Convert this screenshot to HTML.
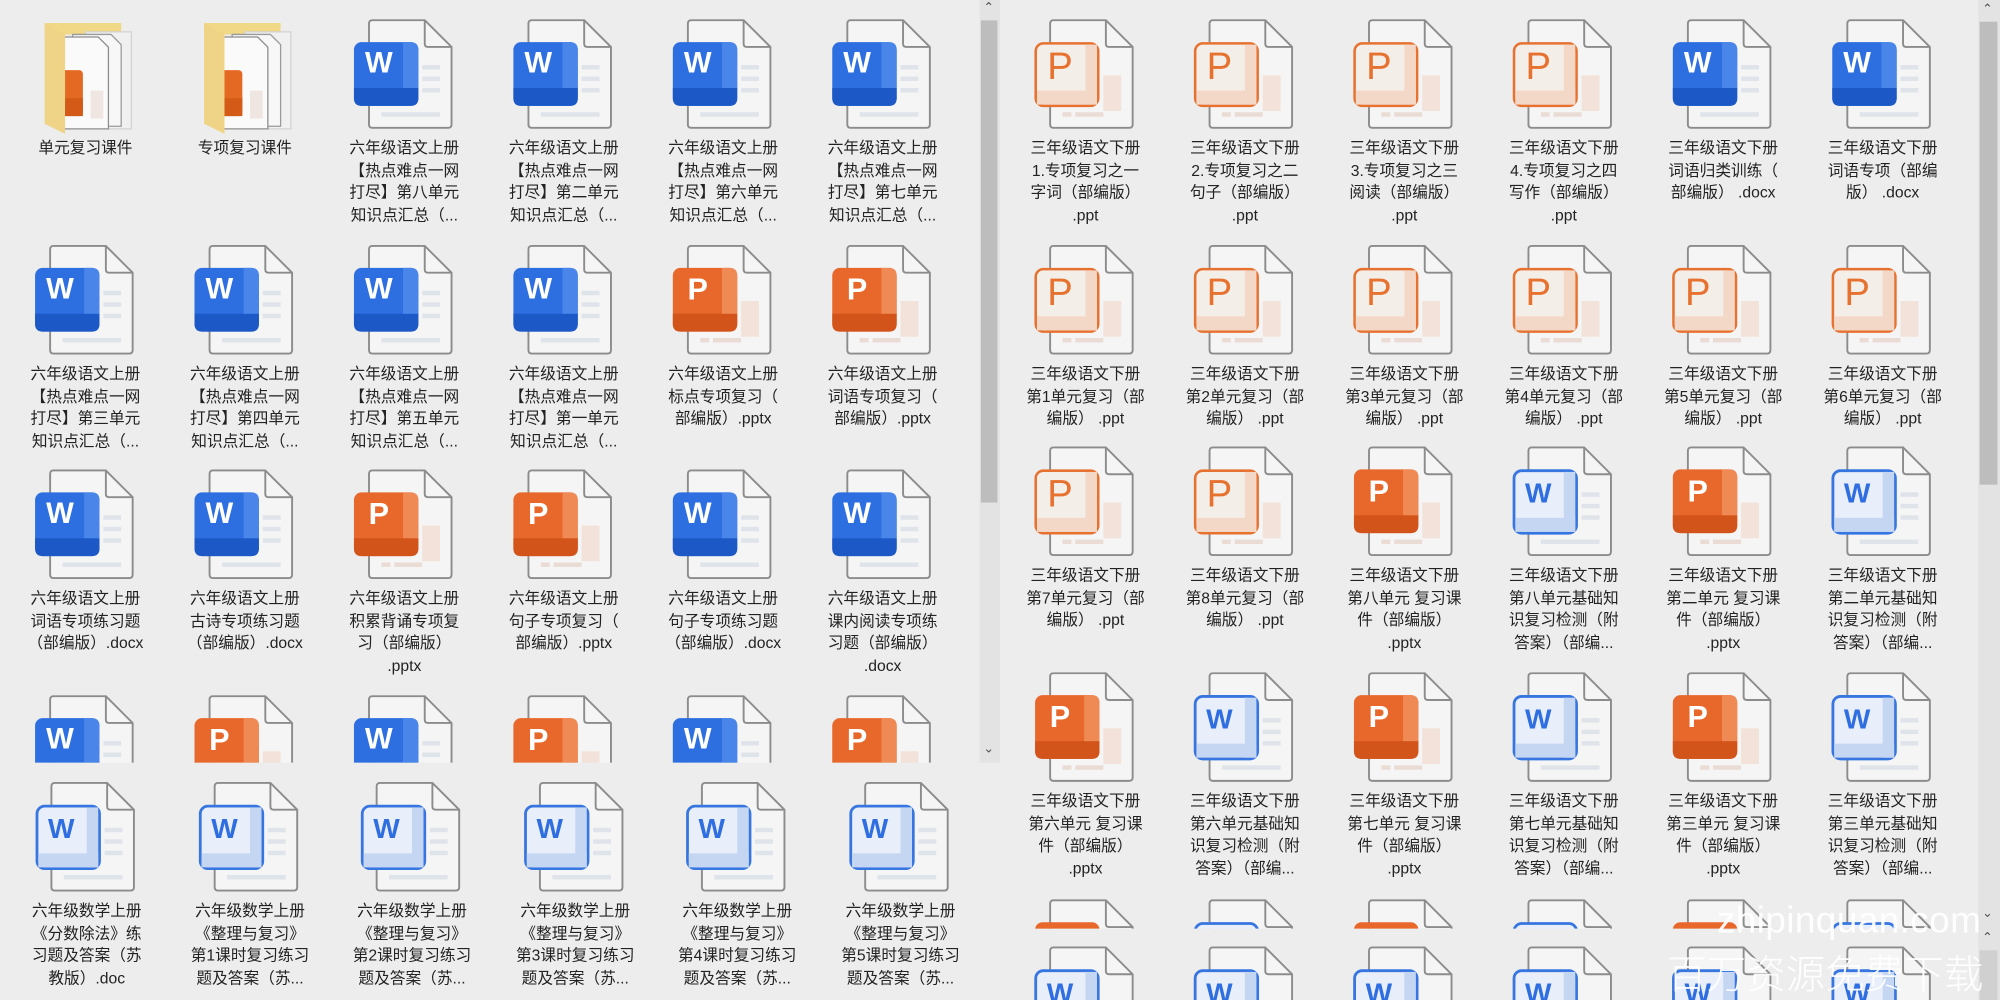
<!DOCTYPE html>
<html><head><meta charset="utf-8">
<style>
html,body{margin:0;padding:0;background:#ededed;width:2000px;height:1000px;overflow:hidden}
#root{position:absolute;left:0;top:0;width:1568px;height:784px;overflow:hidden;transform:scale(1.27551);transform-origin:0 0;background:#ededed;font-family:"Liberation Sans","Noto Sans CJK SC",sans-serif;color:#222}
.win{position:absolute;overflow:hidden}
.c{position:absolute;width:125px;height:180px}
.c svg{position:absolute;left:22.5px;top:0;width:80px;height:90px;overflow:visible}
.t{position:absolute;left:0;top:93px;width:125px;text-align:center;font-size:12.3px;line-height:17.7px;white-space:nowrap}
.sb{position:absolute;background:#e3e3e3}
.th{position:absolute;background:#bdbdbd}
.ar{position:absolute;font-size:10px;color:#555;font-family:"DejaVu Sans",sans-serif}
.wm{position:absolute;color:rgba(255,255,255,0.93);white-space:nowrap;font-family:"Liberation Sans","Noto Sans CJK SC",sans-serif}
</style></head><body>
<svg width="0" height="0" style="position:absolute">
<defs>
<symbol id="pg" viewBox="0 0 80 90"><path d="M15 0.8H56L77 21.8V82.5Q77 85.2 74.3 85.2H15Q12.3 85.2 12.3 82.5V3.5Q12.3 0.8 15 0.8Z" fill="#f5f5f5" stroke="#8c8c8c" stroke-width="1.5"/><path d="M56 0.8V19.3Q56 21.8 58.5 21.8H77" fill="none" stroke="#8c8c8c" stroke-width="1.5"/></symbol>
<symbol id="wl" viewBox="0 0 80 90"><rect x="54" y="36" width="14" height="3.5" fill="#dfe3ea"/><rect x="54" y="45" width="14" height="3.5" fill="#dfe3ea"/><rect x="54" y="54" width="14" height="3.5" fill="#dfe3ea"/><rect x="22" y="73" width="46" height="3.5" fill="#dfe3ea"/></symbol>
<symbol id="pl" viewBox="0 0 80 90"><rect x="54" y="44" width="14" height="28" fill="#f3e2d9"/><rect x="22" y="73" width="7" height="3.5" fill="#eadcd5"/><rect x="32" y="73" width="22" height="3.5" fill="#eadcd5"/></symbol>
<symbol id="fd" viewBox="0 0 80 90"><path d="M8 3H68V12H8Z" fill="#f1d886"/><path d="M40 10H76V86H40Z" fill="#f0f0f0" stroke="#d2d2d2" stroke-width="1"/><path d="M30 12H60L68 20V84H30Z" fill="#f7f7f7" stroke="#9a9a9a" stroke-width="1"/><path d="M20 14H50L58 22V86H20Z" fill="#fafafa" stroke="#8d8d8d" stroke-width="1"/><rect x="44" y="56" width="10" height="22" fill="#efe6e1"/><rect x="20" y="40" width="18" height="36" rx="3" fill="#e46a24"/><rect x="20" y="62" width="18" height="14" fill="#d45a18"/><path d="M8 3L24 12V90L8 82Z" fill="#efd487"/></symbol>
</defs></svg>
<div id="root">

<!-- LEFT TOP WINDOW -->
<div class="win" style="left:0;top:0;width:768px;height:598px">
<div class="c" style="left:4.5px;top:15px"><svg viewBox="0 0 80 90"><use href="#fd"/></svg><div class="t">单元复习课件</div></div>
<div class="c" style="left:129.5px;top:15px"><svg viewBox="0 0 80 90"><use href="#fd"/></svg><div class="t">专项复习课件</div></div>
<div class="c" style="left:254.5px;top:15px"><svg viewBox="0 0 80 90"><use href="#pg"/><use href="#wl"/><rect x="0.5" y="18" width="50.5" height="50" rx="6" fill="#2d6ee0"/><path d="M0.5 54H51V62Q51 68 45 68H6.5Q0.5 68 0.5 62Z" fill="#1c59c6"/><path d="M39 18H45Q51 18 51 24V54H39Z" fill="#4a86ea"/><text x="20" y="42" font-family="Liberation Sans" font-weight="bold" font-size="23" fill="#fff" text-anchor="middle">W</text></svg><div class="t">六年级语文上册<br>【热点难点一网<br>打尽】第八单元<br>知识点汇总（...</div></div>
<div class="c" style="left:379.5px;top:15px"><svg viewBox="0 0 80 90"><use href="#pg"/><use href="#wl"/><rect x="0.5" y="18" width="50.5" height="50" rx="6" fill="#2d6ee0"/><path d="M0.5 54H51V62Q51 68 45 68H6.5Q0.5 68 0.5 62Z" fill="#1c59c6"/><path d="M39 18H45Q51 18 51 24V54H39Z" fill="#4a86ea"/><text x="20" y="42" font-family="Liberation Sans" font-weight="bold" font-size="23" fill="#fff" text-anchor="middle">W</text></svg><div class="t">六年级语文上册<br>【热点难点一网<br>打尽】第二单元<br>知识点汇总（...</div></div>
<div class="c" style="left:504.5px;top:15px"><svg viewBox="0 0 80 90"><use href="#pg"/><use href="#wl"/><rect x="0.5" y="18" width="50.5" height="50" rx="6" fill="#2d6ee0"/><path d="M0.5 54H51V62Q51 68 45 68H6.5Q0.5 68 0.5 62Z" fill="#1c59c6"/><path d="M39 18H45Q51 18 51 24V54H39Z" fill="#4a86ea"/><text x="20" y="42" font-family="Liberation Sans" font-weight="bold" font-size="23" fill="#fff" text-anchor="middle">W</text></svg><div class="t">六年级语文上册<br>【热点难点一网<br>打尽】第六单元<br>知识点汇总（...</div></div>
<div class="c" style="left:629.5px;top:15px"><svg viewBox="0 0 80 90"><use href="#pg"/><use href="#wl"/><rect x="0.5" y="18" width="50.5" height="50" rx="6" fill="#2d6ee0"/><path d="M0.5 54H51V62Q51 68 45 68H6.5Q0.5 68 0.5 62Z" fill="#1c59c6"/><path d="M39 18H45Q51 18 51 24V54H39Z" fill="#4a86ea"/><text x="20" y="42" font-family="Liberation Sans" font-weight="bold" font-size="23" fill="#fff" text-anchor="middle">W</text></svg><div class="t">六年级语文上册<br>【热点难点一网<br>打尽】第七单元<br>知识点汇总（...</div></div>
<div class="c" style="left:4.5px;top:192px"><svg viewBox="0 0 80 90"><use href="#pg"/><use href="#wl"/><rect x="0.5" y="18" width="50.5" height="50" rx="6" fill="#2d6ee0"/><path d="M0.5 54H51V62Q51 68 45 68H6.5Q0.5 68 0.5 62Z" fill="#1c59c6"/><path d="M39 18H45Q51 18 51 24V54H39Z" fill="#4a86ea"/><text x="20" y="42" font-family="Liberation Sans" font-weight="bold" font-size="23" fill="#fff" text-anchor="middle">W</text></svg><div class="t">六年级语文上册<br>【热点难点一网<br>打尽】第三单元<br>知识点汇总（...</div></div>
<div class="c" style="left:129.5px;top:192px"><svg viewBox="0 0 80 90"><use href="#pg"/><use href="#wl"/><rect x="0.5" y="18" width="50.5" height="50" rx="6" fill="#2d6ee0"/><path d="M0.5 54H51V62Q51 68 45 68H6.5Q0.5 68 0.5 62Z" fill="#1c59c6"/><path d="M39 18H45Q51 18 51 24V54H39Z" fill="#4a86ea"/><text x="20" y="42" font-family="Liberation Sans" font-weight="bold" font-size="23" fill="#fff" text-anchor="middle">W</text></svg><div class="t">六年级语文上册<br>【热点难点一网<br>打尽】第四单元<br>知识点汇总（...</div></div>
<div class="c" style="left:254.5px;top:192px"><svg viewBox="0 0 80 90"><use href="#pg"/><use href="#wl"/><rect x="0.5" y="18" width="50.5" height="50" rx="6" fill="#2d6ee0"/><path d="M0.5 54H51V62Q51 68 45 68H6.5Q0.5 68 0.5 62Z" fill="#1c59c6"/><path d="M39 18H45Q51 18 51 24V54H39Z" fill="#4a86ea"/><text x="20" y="42" font-family="Liberation Sans" font-weight="bold" font-size="23" fill="#fff" text-anchor="middle">W</text></svg><div class="t">六年级语文上册<br>【热点难点一网<br>打尽】第五单元<br>知识点汇总（...</div></div>
<div class="c" style="left:379.5px;top:192px"><svg viewBox="0 0 80 90"><use href="#pg"/><use href="#wl"/><rect x="0.5" y="18" width="50.5" height="50" rx="6" fill="#2d6ee0"/><path d="M0.5 54H51V62Q51 68 45 68H6.5Q0.5 68 0.5 62Z" fill="#1c59c6"/><path d="M39 18H45Q51 18 51 24V54H39Z" fill="#4a86ea"/><text x="20" y="42" font-family="Liberation Sans" font-weight="bold" font-size="23" fill="#fff" text-anchor="middle">W</text></svg><div class="t">六年级语文上册<br>【热点难点一网<br>打尽】第一单元<br>知识点汇总（...</div></div>
<div class="c" style="left:504.5px;top:192px"><svg viewBox="0 0 80 90"><use href="#pg"/><use href="#pl"/><rect x="0.5" y="18" width="50.5" height="50" rx="6" fill="#e8672a"/><path d="M0.5 54H51V62Q51 68 45 68H6.5Q0.5 68 0.5 62Z" fill="#d2541b"/><path d="M39 18H45Q51 18 51 24V54H39Z" fill="#f08a55"/><text x="20" y="43" font-family="Liberation Sans" font-weight="bold" font-size="24" fill="#fff" text-anchor="middle">P</text></svg><div class="t">六年级语文上册<br>标点专项复习（<br>部编版）.pptx</div></div>
<div class="c" style="left:629.5px;top:192px"><svg viewBox="0 0 80 90"><use href="#pg"/><use href="#pl"/><rect x="0.5" y="18" width="50.5" height="50" rx="6" fill="#e8672a"/><path d="M0.5 54H51V62Q51 68 45 68H6.5Q0.5 68 0.5 62Z" fill="#d2541b"/><path d="M39 18H45Q51 18 51 24V54H39Z" fill="#f08a55"/><text x="20" y="43" font-family="Liberation Sans" font-weight="bold" font-size="24" fill="#fff" text-anchor="middle">P</text></svg><div class="t">六年级语文上册<br>词语专项复习（<br>部编版）.pptx</div></div>
<div class="c" style="left:4.5px;top:368px"><svg viewBox="0 0 80 90"><use href="#pg"/><use href="#wl"/><rect x="0.5" y="18" width="50.5" height="50" rx="6" fill="#2d6ee0"/><path d="M0.5 54H51V62Q51 68 45 68H6.5Q0.5 68 0.5 62Z" fill="#1c59c6"/><path d="M39 18H45Q51 18 51 24V54H39Z" fill="#4a86ea"/><text x="20" y="42" font-family="Liberation Sans" font-weight="bold" font-size="23" fill="#fff" text-anchor="middle">W</text></svg><div class="t">六年级语文上册<br>词语专项练习题<br>（部编版）.docx</div></div>
<div class="c" style="left:129.5px;top:368px"><svg viewBox="0 0 80 90"><use href="#pg"/><use href="#wl"/><rect x="0.5" y="18" width="50.5" height="50" rx="6" fill="#2d6ee0"/><path d="M0.5 54H51V62Q51 68 45 68H6.5Q0.5 68 0.5 62Z" fill="#1c59c6"/><path d="M39 18H45Q51 18 51 24V54H39Z" fill="#4a86ea"/><text x="20" y="42" font-family="Liberation Sans" font-weight="bold" font-size="23" fill="#fff" text-anchor="middle">W</text></svg><div class="t">六年级语文上册<br>古诗专项练习题<br>（部编版）.docx</div></div>
<div class="c" style="left:254.5px;top:368px"><svg viewBox="0 0 80 90"><use href="#pg"/><use href="#pl"/><rect x="0.5" y="18" width="50.5" height="50" rx="6" fill="#e8672a"/><path d="M0.5 54H51V62Q51 68 45 68H6.5Q0.5 68 0.5 62Z" fill="#d2541b"/><path d="M39 18H45Q51 18 51 24V54H39Z" fill="#f08a55"/><text x="20" y="43" font-family="Liberation Sans" font-weight="bold" font-size="24" fill="#fff" text-anchor="middle">P</text></svg><div class="t">六年级语文上册<br>积累背诵专项复<br>习（部编版）<br>.pptx</div></div>
<div class="c" style="left:379.5px;top:368px"><svg viewBox="0 0 80 90"><use href="#pg"/><use href="#pl"/><rect x="0.5" y="18" width="50.5" height="50" rx="6" fill="#e8672a"/><path d="M0.5 54H51V62Q51 68 45 68H6.5Q0.5 68 0.5 62Z" fill="#d2541b"/><path d="M39 18H45Q51 18 51 24V54H39Z" fill="#f08a55"/><text x="20" y="43" font-family="Liberation Sans" font-weight="bold" font-size="24" fill="#fff" text-anchor="middle">P</text></svg><div class="t">六年级语文上册<br>句子专项复习（<br>部编版）.pptx</div></div>
<div class="c" style="left:504.5px;top:368px"><svg viewBox="0 0 80 90"><use href="#pg"/><use href="#wl"/><rect x="0.5" y="18" width="50.5" height="50" rx="6" fill="#2d6ee0"/><path d="M0.5 54H51V62Q51 68 45 68H6.5Q0.5 68 0.5 62Z" fill="#1c59c6"/><path d="M39 18H45Q51 18 51 24V54H39Z" fill="#4a86ea"/><text x="20" y="42" font-family="Liberation Sans" font-weight="bold" font-size="23" fill="#fff" text-anchor="middle">W</text></svg><div class="t">六年级语文上册<br>句子专项练习题<br>（部编版）.docx</div></div>
<div class="c" style="left:629.5px;top:368px"><svg viewBox="0 0 80 90"><use href="#pg"/><use href="#wl"/><rect x="0.5" y="18" width="50.5" height="50" rx="6" fill="#2d6ee0"/><path d="M0.5 54H51V62Q51 68 45 68H6.5Q0.5 68 0.5 62Z" fill="#1c59c6"/><path d="M39 18H45Q51 18 51 24V54H39Z" fill="#4a86ea"/><text x="20" y="42" font-family="Liberation Sans" font-weight="bold" font-size="23" fill="#fff" text-anchor="middle">W</text></svg><div class="t">六年级语文上册<br>课内阅读专项练<br>习题（部编版）<br>.docx</div></div>
<div class="c" style="left:4.5px;top:545px"><svg viewBox="0 0 80 90"><use href="#pg"/><use href="#wl"/><rect x="0.5" y="18" width="50.5" height="50" rx="6" fill="#2d6ee0"/><path d="M39 18H45Q51 18 51 24V54H39Z" fill="#4a86ea"/><text x="20" y="42" font-family="Liberation Sans" font-weight="bold" font-size="23" fill="#fff" text-anchor="middle">W</text></svg></div>
<div class="c" style="left:129.5px;top:545px"><svg viewBox="0 0 80 90"><use href="#pg"/><use href="#pl"/><rect x="0.5" y="18" width="50.5" height="50" rx="6" fill="#e8672a"/><path d="M39 18H45Q51 18 51 24V54H39Z" fill="#f08a55"/><text x="20" y="43" font-family="Liberation Sans" font-weight="bold" font-size="24" fill="#fff" text-anchor="middle">P</text></svg></div>
<div class="c" style="left:254.5px;top:545px"><svg viewBox="0 0 80 90"><use href="#pg"/><use href="#wl"/><rect x="0.5" y="18" width="50.5" height="50" rx="6" fill="#2d6ee0"/><path d="M39 18H45Q51 18 51 24V54H39Z" fill="#4a86ea"/><text x="20" y="42" font-family="Liberation Sans" font-weight="bold" font-size="23" fill="#fff" text-anchor="middle">W</text></svg></div>
<div class="c" style="left:379.5px;top:545px"><svg viewBox="0 0 80 90"><use href="#pg"/><use href="#pl"/><rect x="0.5" y="18" width="50.5" height="50" rx="6" fill="#e8672a"/><path d="M39 18H45Q51 18 51 24V54H39Z" fill="#f08a55"/><text x="20" y="43" font-family="Liberation Sans" font-weight="bold" font-size="24" fill="#fff" text-anchor="middle">P</text></svg></div>
<div class="c" style="left:504.5px;top:545px"><svg viewBox="0 0 80 90"><use href="#pg"/><use href="#wl"/><rect x="0.5" y="18" width="50.5" height="50" rx="6" fill="#2d6ee0"/><path d="M39 18H45Q51 18 51 24V54H39Z" fill="#4a86ea"/><text x="20" y="42" font-family="Liberation Sans" font-weight="bold" font-size="23" fill="#fff" text-anchor="middle">W</text></svg></div>
<div class="c" style="left:629.5px;top:545px"><svg viewBox="0 0 80 90"><use href="#pg"/><use href="#pl"/><rect x="0.5" y="18" width="50.5" height="50" rx="6" fill="#e8672a"/><path d="M39 18H45Q51 18 51 24V54H39Z" fill="#f08a55"/><text x="20" y="43" font-family="Liberation Sans" font-weight="bold" font-size="24" fill="#fff" text-anchor="middle">P</text></svg></div>
</div>
<div class="sb" style="left:768px;top:0;width:16px;height:598px"></div>
<div class="th" style="left:769px;top:16px;width:13px;height:378px"></div>
<div class="ar" style="left:771px;top:1px">&#8963;</div>
<div class="ar" style="left:771px;top:582px">&#8964;</div>

<!-- BOTTOM LEFT WINDOW -->
<div class="win" style="left:0;top:598px;width:784px;height:186px;background:#ededed">
<div class="c" style="left:5.5px;top:15px"><svg viewBox="0 0 80 90"><use href="#pg"/><use href="#wl"/><rect x="1" y="19" width="49" height="49" rx="6" fill="#e8eefa" stroke="#3776e0" stroke-width="2.2"/><rect x="40" y="20" width="9" height="47" fill="#c5d6f3"/><rect x="2" y="56" width="47" height="11" fill="#c5d6f3"/><text x="20" y="44" font-family="Liberation Sans" font-weight="bold" font-size="22" fill="#2f6ee0" text-anchor="middle">W</text></svg><div class="t" style="top:93px">六年级数学上册<br>《分数除法》练<br>习题及答案（苏<br>教版）.doc</div></div>
<div class="c" style="left:133.5px;top:15px"><svg viewBox="0 0 80 90"><use href="#pg"/><use href="#wl"/><rect x="1" y="19" width="49" height="49" rx="6" fill="#e8eefa" stroke="#3776e0" stroke-width="2.2"/><rect x="40" y="20" width="9" height="47" fill="#c5d6f3"/><rect x="2" y="56" width="47" height="11" fill="#c5d6f3"/><text x="20" y="44" font-family="Liberation Sans" font-weight="bold" font-size="22" fill="#2f6ee0" text-anchor="middle">W</text></svg><div class="t" style="top:93px">六年级数学上册<br>《整理与复习》<br>第1课时复习练习<br>题及答案（苏...</div></div>
<div class="c" style="left:260.5px;top:15px"><svg viewBox="0 0 80 90"><use href="#pg"/><use href="#wl"/><rect x="1" y="19" width="49" height="49" rx="6" fill="#e8eefa" stroke="#3776e0" stroke-width="2.2"/><rect x="40" y="20" width="9" height="47" fill="#c5d6f3"/><rect x="2" y="56" width="47" height="11" fill="#c5d6f3"/><text x="20" y="44" font-family="Liberation Sans" font-weight="bold" font-size="22" fill="#2f6ee0" text-anchor="middle">W</text></svg><div class="t" style="top:93px">六年级数学上册<br>《整理与复习》<br>第2课时复习练习<br>题及答案（苏...</div></div>
<div class="c" style="left:388.5px;top:15px"><svg viewBox="0 0 80 90"><use href="#pg"/><use href="#wl"/><rect x="1" y="19" width="49" height="49" rx="6" fill="#e8eefa" stroke="#3776e0" stroke-width="2.2"/><rect x="40" y="20" width="9" height="47" fill="#c5d6f3"/><rect x="2" y="56" width="47" height="11" fill="#c5d6f3"/><text x="20" y="44" font-family="Liberation Sans" font-weight="bold" font-size="22" fill="#2f6ee0" text-anchor="middle">W</text></svg><div class="t" style="top:93px">六年级数学上册<br>《整理与复习》<br>第3课时复习练习<br>题及答案（苏...</div></div>
<div class="c" style="left:515.5px;top:15px"><svg viewBox="0 0 80 90"><use href="#pg"/><use href="#wl"/><rect x="1" y="19" width="49" height="49" rx="6" fill="#e8eefa" stroke="#3776e0" stroke-width="2.2"/><rect x="40" y="20" width="9" height="47" fill="#c5d6f3"/><rect x="2" y="56" width="47" height="11" fill="#c5d6f3"/><text x="20" y="44" font-family="Liberation Sans" font-weight="bold" font-size="22" fill="#2f6ee0" text-anchor="middle">W</text></svg><div class="t" style="top:93px">六年级数学上册<br>《整理与复习》<br>第4课时复习练习<br>题及答案（苏...</div></div>
<div class="c" style="left:643.5px;top:15px"><svg viewBox="0 0 80 90"><use href="#pg"/><use href="#wl"/><rect x="1" y="19" width="49" height="49" rx="6" fill="#e8eefa" stroke="#3776e0" stroke-width="2.2"/><rect x="40" y="20" width="9" height="47" fill="#c5d6f3"/><rect x="2" y="56" width="47" height="11" fill="#c5d6f3"/><text x="20" y="44" font-family="Liberation Sans" font-weight="bold" font-size="22" fill="#2f6ee0" text-anchor="middle">W</text></svg><div class="t" style="top:93px">六年级数学上册<br>《整理与复习》<br>第5课时复习练习<br>题及答案（苏...</div></div>
</div>

<!-- RIGHT WINDOW -->
<div class="win" style="left:784px;top:0;width:767px;height:728px">
<div class="c" style="left:4.5px;top:15px"><svg viewBox="0 0 80 90"><use href="#pg"/><use href="#pl"/><rect x="1" y="19" width="49" height="49" rx="6" fill="#f4eee9" stroke="#e7722f" stroke-width="2"/><rect x="40" y="20" width="9" height="47" fill="#f3d8c8"/><rect x="2" y="56" width="47" height="11" fill="#f3d8c8"/><text x="20" y="47" font-family="Liberation Sans" font-size="30" fill="#e7722f" text-anchor="middle">P</text></svg><div class="t">三年级语文下册<br>1.专项复习之一<br>字词（部编版）<br>.ppt</div></div>
<div class="c" style="left:129.5px;top:15px"><svg viewBox="0 0 80 90"><use href="#pg"/><use href="#pl"/><rect x="1" y="19" width="49" height="49" rx="6" fill="#f4eee9" stroke="#e7722f" stroke-width="2"/><rect x="40" y="20" width="9" height="47" fill="#f3d8c8"/><rect x="2" y="56" width="47" height="11" fill="#f3d8c8"/><text x="20" y="47" font-family="Liberation Sans" font-size="30" fill="#e7722f" text-anchor="middle">P</text></svg><div class="t">三年级语文下册<br>2.专项复习之二<br>句子（部编版）<br>.ppt</div></div>
<div class="c" style="left:254.5px;top:15px"><svg viewBox="0 0 80 90"><use href="#pg"/><use href="#pl"/><rect x="1" y="19" width="49" height="49" rx="6" fill="#f4eee9" stroke="#e7722f" stroke-width="2"/><rect x="40" y="20" width="9" height="47" fill="#f3d8c8"/><rect x="2" y="56" width="47" height="11" fill="#f3d8c8"/><text x="20" y="47" font-family="Liberation Sans" font-size="30" fill="#e7722f" text-anchor="middle">P</text></svg><div class="t">三年级语文下册<br>3.专项复习之三<br>阅读（部编版）<br>.ppt</div></div>
<div class="c" style="left:379.5px;top:15px"><svg viewBox="0 0 80 90"><use href="#pg"/><use href="#pl"/><rect x="1" y="19" width="49" height="49" rx="6" fill="#f4eee9" stroke="#e7722f" stroke-width="2"/><rect x="40" y="20" width="9" height="47" fill="#f3d8c8"/><rect x="2" y="56" width="47" height="11" fill="#f3d8c8"/><text x="20" y="47" font-family="Liberation Sans" font-size="30" fill="#e7722f" text-anchor="middle">P</text></svg><div class="t">三年级语文下册<br>4.专项复习之四<br>写作（部编版）<br>.ppt</div></div>
<div class="c" style="left:504.5px;top:15px"><svg viewBox="0 0 80 90"><use href="#pg"/><use href="#wl"/><rect x="0.5" y="18" width="50.5" height="50" rx="6" fill="#2d6ee0"/><path d="M0.5 54H51V62Q51 68 45 68H6.5Q0.5 68 0.5 62Z" fill="#1c59c6"/><path d="M39 18H45Q51 18 51 24V54H39Z" fill="#4a86ea"/><text x="20" y="42" font-family="Liberation Sans" font-weight="bold" font-size="23" fill="#fff" text-anchor="middle">W</text></svg><div class="t">三年级语文下册<br>词语归类训练（<br>部编版） .docx</div></div>
<div class="c" style="left:629.5px;top:15px"><svg viewBox="0 0 80 90"><use href="#pg"/><use href="#wl"/><rect x="0.5" y="18" width="50.5" height="50" rx="6" fill="#2d6ee0"/><path d="M0.5 54H51V62Q51 68 45 68H6.5Q0.5 68 0.5 62Z" fill="#1c59c6"/><path d="M39 18H45Q51 18 51 24V54H39Z" fill="#4a86ea"/><text x="20" y="42" font-family="Liberation Sans" font-weight="bold" font-size="23" fill="#fff" text-anchor="middle">W</text></svg><div class="t">三年级语文下册<br>词语专项（部编<br>版） .docx</div></div>
<div class="c" style="left:4.5px;top:192px"><svg viewBox="0 0 80 90"><use href="#pg"/><use href="#pl"/><rect x="1" y="19" width="49" height="49" rx="6" fill="#f4eee9" stroke="#e7722f" stroke-width="2"/><rect x="40" y="20" width="9" height="47" fill="#f3d8c8"/><rect x="2" y="56" width="47" height="11" fill="#f3d8c8"/><text x="20" y="47" font-family="Liberation Sans" font-size="30" fill="#e7722f" text-anchor="middle">P</text></svg><div class="t">三年级语文下册<br>第1单元复习（部<br>编版） .ppt</div></div>
<div class="c" style="left:129.5px;top:192px"><svg viewBox="0 0 80 90"><use href="#pg"/><use href="#pl"/><rect x="1" y="19" width="49" height="49" rx="6" fill="#f4eee9" stroke="#e7722f" stroke-width="2"/><rect x="40" y="20" width="9" height="47" fill="#f3d8c8"/><rect x="2" y="56" width="47" height="11" fill="#f3d8c8"/><text x="20" y="47" font-family="Liberation Sans" font-size="30" fill="#e7722f" text-anchor="middle">P</text></svg><div class="t">三年级语文下册<br>第2单元复习（部<br>编版） .ppt</div></div>
<div class="c" style="left:254.5px;top:192px"><svg viewBox="0 0 80 90"><use href="#pg"/><use href="#pl"/><rect x="1" y="19" width="49" height="49" rx="6" fill="#f4eee9" stroke="#e7722f" stroke-width="2"/><rect x="40" y="20" width="9" height="47" fill="#f3d8c8"/><rect x="2" y="56" width="47" height="11" fill="#f3d8c8"/><text x="20" y="47" font-family="Liberation Sans" font-size="30" fill="#e7722f" text-anchor="middle">P</text></svg><div class="t">三年级语文下册<br>第3单元复习（部<br>编版） .ppt</div></div>
<div class="c" style="left:379.5px;top:192px"><svg viewBox="0 0 80 90"><use href="#pg"/><use href="#pl"/><rect x="1" y="19" width="49" height="49" rx="6" fill="#f4eee9" stroke="#e7722f" stroke-width="2"/><rect x="40" y="20" width="9" height="47" fill="#f3d8c8"/><rect x="2" y="56" width="47" height="11" fill="#f3d8c8"/><text x="20" y="47" font-family="Liberation Sans" font-size="30" fill="#e7722f" text-anchor="middle">P</text></svg><div class="t">三年级语文下册<br>第4单元复习（部<br>编版） .ppt</div></div>
<div class="c" style="left:504.5px;top:192px"><svg viewBox="0 0 80 90"><use href="#pg"/><use href="#pl"/><rect x="1" y="19" width="49" height="49" rx="6" fill="#f4eee9" stroke="#e7722f" stroke-width="2"/><rect x="40" y="20" width="9" height="47" fill="#f3d8c8"/><rect x="2" y="56" width="47" height="11" fill="#f3d8c8"/><text x="20" y="47" font-family="Liberation Sans" font-size="30" fill="#e7722f" text-anchor="middle">P</text></svg><div class="t">三年级语文下册<br>第5单元复习（部<br>编版） .ppt</div></div>
<div class="c" style="left:629.5px;top:192px"><svg viewBox="0 0 80 90"><use href="#pg"/><use href="#pl"/><rect x="1" y="19" width="49" height="49" rx="6" fill="#f4eee9" stroke="#e7722f" stroke-width="2"/><rect x="40" y="20" width="9" height="47" fill="#f3d8c8"/><rect x="2" y="56" width="47" height="11" fill="#f3d8c8"/><text x="20" y="47" font-family="Liberation Sans" font-size="30" fill="#e7722f" text-anchor="middle">P</text></svg><div class="t">三年级语文下册<br>第6单元复习（部<br>编版） .ppt</div></div>
<div class="c" style="left:4.5px;top:350px"><svg viewBox="0 0 80 90"><use href="#pg"/><use href="#pl"/><rect x="1" y="19" width="49" height="49" rx="6" fill="#f4eee9" stroke="#e7722f" stroke-width="2"/><rect x="40" y="20" width="9" height="47" fill="#f3d8c8"/><rect x="2" y="56" width="47" height="11" fill="#f3d8c8"/><text x="20" y="47" font-family="Liberation Sans" font-size="30" fill="#e7722f" text-anchor="middle">P</text></svg><div class="t">三年级语文下册<br>第7单元复习（部<br>编版） .ppt</div></div>
<div class="c" style="left:129.5px;top:350px"><svg viewBox="0 0 80 90"><use href="#pg"/><use href="#pl"/><rect x="1" y="19" width="49" height="49" rx="6" fill="#f4eee9" stroke="#e7722f" stroke-width="2"/><rect x="40" y="20" width="9" height="47" fill="#f3d8c8"/><rect x="2" y="56" width="47" height="11" fill="#f3d8c8"/><text x="20" y="47" font-family="Liberation Sans" font-size="30" fill="#e7722f" text-anchor="middle">P</text></svg><div class="t">三年级语文下册<br>第8单元复习（部<br>编版） .ppt</div></div>
<div class="c" style="left:254.5px;top:350px"><svg viewBox="0 0 80 90"><use href="#pg"/><use href="#pl"/><rect x="0.5" y="18" width="50.5" height="50" rx="6" fill="#e8672a"/><path d="M0.5 54H51V62Q51 68 45 68H6.5Q0.5 68 0.5 62Z" fill="#d2541b"/><path d="M39 18H45Q51 18 51 24V54H39Z" fill="#f08a55"/><text x="20" y="43" font-family="Liberation Sans" font-weight="bold" font-size="24" fill="#fff" text-anchor="middle">P</text></svg><div class="t">三年级语文下册<br>第八单元 复习课<br>件（部编版）<br>.pptx</div></div>
<div class="c" style="left:379.5px;top:350px"><svg viewBox="0 0 80 90"><use href="#pg"/><use href="#wl"/><rect x="1" y="19" width="49" height="49" rx="6" fill="#e8eefa" stroke="#3776e0" stroke-width="2.2"/><rect x="40" y="20" width="9" height="47" fill="#c5d6f3"/><rect x="2" y="56" width="47" height="11" fill="#c5d6f3"/><text x="20" y="44" font-family="Liberation Sans" font-weight="bold" font-size="22" fill="#2f6ee0" text-anchor="middle">W</text></svg><div class="t">三年级语文下册<br>第八单元基础知<br>识复习检测（附<br>答案）（部编...</div></div>
<div class="c" style="left:504.5px;top:350px"><svg viewBox="0 0 80 90"><use href="#pg"/><use href="#pl"/><rect x="0.5" y="18" width="50.5" height="50" rx="6" fill="#e8672a"/><path d="M0.5 54H51V62Q51 68 45 68H6.5Q0.5 68 0.5 62Z" fill="#d2541b"/><path d="M39 18H45Q51 18 51 24V54H39Z" fill="#f08a55"/><text x="20" y="43" font-family="Liberation Sans" font-weight="bold" font-size="24" fill="#fff" text-anchor="middle">P</text></svg><div class="t">三年级语文下册<br>第二单元 复习课<br>件（部编版）<br>.pptx</div></div>
<div class="c" style="left:629.5px;top:350px"><svg viewBox="0 0 80 90"><use href="#pg"/><use href="#wl"/><rect x="1" y="19" width="49" height="49" rx="6" fill="#e8eefa" stroke="#3776e0" stroke-width="2.2"/><rect x="40" y="20" width="9" height="47" fill="#c5d6f3"/><rect x="2" y="56" width="47" height="11" fill="#c5d6f3"/><text x="20" y="44" font-family="Liberation Sans" font-weight="bold" font-size="22" fill="#2f6ee0" text-anchor="middle">W</text></svg><div class="t">三年级语文下册<br>第二单元基础知<br>识复习检测（附<br>答案）（部编...</div></div>
<div class="c" style="left:4.5px;top:527px"><svg viewBox="0 0 80 90"><use href="#pg"/><use href="#pl"/><rect x="0.5" y="18" width="50.5" height="50" rx="6" fill="#e8672a"/><path d="M0.5 54H51V62Q51 68 45 68H6.5Q0.5 68 0.5 62Z" fill="#d2541b"/><path d="M39 18H45Q51 18 51 24V54H39Z" fill="#f08a55"/><text x="20" y="43" font-family="Liberation Sans" font-weight="bold" font-size="24" fill="#fff" text-anchor="middle">P</text></svg><div class="t">三年级语文下册<br>第六单元 复习课<br>件（部编版）<br>.pptx</div></div>
<div class="c" style="left:129.5px;top:527px"><svg viewBox="0 0 80 90"><use href="#pg"/><use href="#wl"/><rect x="1" y="19" width="49" height="49" rx="6" fill="#e8eefa" stroke="#3776e0" stroke-width="2.2"/><rect x="40" y="20" width="9" height="47" fill="#c5d6f3"/><rect x="2" y="56" width="47" height="11" fill="#c5d6f3"/><text x="20" y="44" font-family="Liberation Sans" font-weight="bold" font-size="22" fill="#2f6ee0" text-anchor="middle">W</text></svg><div class="t">三年级语文下册<br>第六单元基础知<br>识复习检测（附<br>答案）（部编...</div></div>
<div class="c" style="left:254.5px;top:527px"><svg viewBox="0 0 80 90"><use href="#pg"/><use href="#pl"/><rect x="0.5" y="18" width="50.5" height="50" rx="6" fill="#e8672a"/><path d="M0.5 54H51V62Q51 68 45 68H6.5Q0.5 68 0.5 62Z" fill="#d2541b"/><path d="M39 18H45Q51 18 51 24V54H39Z" fill="#f08a55"/><text x="20" y="43" font-family="Liberation Sans" font-weight="bold" font-size="24" fill="#fff" text-anchor="middle">P</text></svg><div class="t">三年级语文下册<br>第七单元 复习课<br>件（部编版）<br>.pptx</div></div>
<div class="c" style="left:379.5px;top:527px"><svg viewBox="0 0 80 90"><use href="#pg"/><use href="#wl"/><rect x="1" y="19" width="49" height="49" rx="6" fill="#e8eefa" stroke="#3776e0" stroke-width="2.2"/><rect x="40" y="20" width="9" height="47" fill="#c5d6f3"/><rect x="2" y="56" width="47" height="11" fill="#c5d6f3"/><text x="20" y="44" font-family="Liberation Sans" font-weight="bold" font-size="22" fill="#2f6ee0" text-anchor="middle">W</text></svg><div class="t">三年级语文下册<br>第七单元基础知<br>识复习检测（附<br>答案）（部编...</div></div>
<div class="c" style="left:504.5px;top:527px"><svg viewBox="0 0 80 90"><use href="#pg"/><use href="#pl"/><rect x="0.5" y="18" width="50.5" height="50" rx="6" fill="#e8672a"/><path d="M0.5 54H51V62Q51 68 45 68H6.5Q0.5 68 0.5 62Z" fill="#d2541b"/><path d="M39 18H45Q51 18 51 24V54H39Z" fill="#f08a55"/><text x="20" y="43" font-family="Liberation Sans" font-weight="bold" font-size="24" fill="#fff" text-anchor="middle">P</text></svg><div class="t">三年级语文下册<br>第三单元 复习课<br>件（部编版）<br>.pptx</div></div>
<div class="c" style="left:629.5px;top:527px"><svg viewBox="0 0 80 90"><use href="#pg"/><use href="#wl"/><rect x="1" y="19" width="49" height="49" rx="6" fill="#e8eefa" stroke="#3776e0" stroke-width="2.2"/><rect x="40" y="20" width="9" height="47" fill="#c5d6f3"/><rect x="2" y="56" width="47" height="11" fill="#c5d6f3"/><text x="20" y="44" font-family="Liberation Sans" font-weight="bold" font-size="22" fill="#2f6ee0" text-anchor="middle">W</text></svg><div class="t">三年级语文下册<br>第三单元基础知<br>识复习检测（附<br>答案）（部编...</div></div>
<div class="c" style="left:4.5px;top:705px"><svg viewBox="0 0 80 90"><use href="#pg"/><rect x="0.5" y="18" width="50.5" height="50" rx="6" fill="#e8672a"/></svg></div>
<div class="c" style="left:129.5px;top:705px"><svg viewBox="0 0 80 90"><use href="#pg"/><rect x="1" y="19" width="49" height="49" rx="6" fill="#e8eefa" stroke="#3776e0" stroke-width="2.2"/></svg></div>
<div class="c" style="left:254.5px;top:705px"><svg viewBox="0 0 80 90"><use href="#pg"/><rect x="0.5" y="18" width="50.5" height="50" rx="6" fill="#e8672a"/></svg></div>
<div class="c" style="left:379.5px;top:705px"><svg viewBox="0 0 80 90"><use href="#pg"/><rect x="1" y="19" width="49" height="49" rx="6" fill="#e8eefa" stroke="#3776e0" stroke-width="2.2"/></svg></div>
<div class="c" style="left:504.5px;top:705px"><svg viewBox="0 0 80 90"><use href="#pg"/><rect x="0.5" y="18" width="50.5" height="50" rx="6" fill="#e8672a"/></svg></div>
<div class="c" style="left:629.5px;top:705px"><svg viewBox="0 0 80 90"><use href="#pg"/><rect x="1" y="19" width="49" height="49" rx="6" fill="#e8eefa" stroke="#3776e0" stroke-width="2.2"/></svg></div>
</div>
<div class="win" style="left:784px;top:736px;width:767px;height:48px">
<div class="c" style="left:4.5px;top:6px"><svg viewBox="0 0 80 90"><use href="#pg"/><rect x="1" y="19" width="49" height="49" rx="6" fill="#e8eefa" stroke="#3776e0" stroke-width="2.2"/><rect x="40" y="20" width="9" height="47" fill="#c5d6f3"/><text x="20" y="44" font-family="Liberation Sans" font-weight="bold" font-size="22" fill="#2f6ee0" text-anchor="middle">W</text></svg></div>
<div class="c" style="left:129.5px;top:6px"><svg viewBox="0 0 80 90"><use href="#pg"/><rect x="1" y="19" width="49" height="49" rx="6" fill="#e8eefa" stroke="#3776e0" stroke-width="2.2"/><rect x="40" y="20" width="9" height="47" fill="#c5d6f3"/><text x="20" y="44" font-family="Liberation Sans" font-weight="bold" font-size="22" fill="#2f6ee0" text-anchor="middle">W</text></svg></div>
<div class="c" style="left:254.5px;top:6px"><svg viewBox="0 0 80 90"><use href="#pg"/><rect x="1" y="19" width="49" height="49" rx="6" fill="#e8eefa" stroke="#3776e0" stroke-width="2.2"/><rect x="40" y="20" width="9" height="47" fill="#c5d6f3"/><text x="20" y="44" font-family="Liberation Sans" font-weight="bold" font-size="22" fill="#2f6ee0" text-anchor="middle">W</text></svg></div>
<div class="c" style="left:379.5px;top:6px"><svg viewBox="0 0 80 90"><use href="#pg"/><rect x="1" y="19" width="49" height="49" rx="6" fill="#e8eefa" stroke="#3776e0" stroke-width="2.2"/><rect x="40" y="20" width="9" height="47" fill="#c5d6f3"/><text x="20" y="44" font-family="Liberation Sans" font-weight="bold" font-size="22" fill="#2f6ee0" text-anchor="middle">W</text></svg></div>
<div class="c" style="left:504.5px;top:6px"><svg viewBox="0 0 80 90"><use href="#pg"/><rect x="1" y="19" width="49" height="49" rx="6" fill="#e8eefa" stroke="#3776e0" stroke-width="2.2"/><rect x="40" y="20" width="9" height="47" fill="#c5d6f3"/><text x="20" y="44" font-family="Liberation Sans" font-weight="bold" font-size="22" fill="#2f6ee0" text-anchor="middle">W</text></svg></div>
<div class="c" style="left:629.5px;top:6px"><svg viewBox="0 0 80 90"><use href="#pg"/><rect x="1" y="19" width="49" height="49" rx="6" fill="#e8eefa" stroke="#3776e0" stroke-width="2.2"/><rect x="40" y="20" width="9" height="47" fill="#c5d6f3"/><text x="20" y="44" font-family="Liberation Sans" font-weight="bold" font-size="22" fill="#2f6ee0" text-anchor="middle">W</text></svg></div>
</div>

<div class="sb" style="left:1551px;top:0;width:17px;height:784px"></div>
<div class="th" style="left:1552px;top:17px;width:14px;height:363px"></div>
<div class="ar" style="left:1554px;top:2px">&#8963;</div>
<div class="ar" style="left:1554px;top:711px">&#8964;</div>
<div class="ar" style="left:1554px;top:730px">&#8963;</div>
<div class="th" style="left:1552px;top:745px;width:14px;height:39px;background:#d0d0d0"></div>

<div class="wm" style="left:1346px;top:706px;font-size:29px;letter-spacing:0.3px">zhipinquan.com</div>
<div class="wm" style="left:1307px;top:742px;font-size:31px;font-family:'Noto Sans CJK SC',sans-serif;font-weight:300;line-height:40px">百万资源免费下载</div>
</div>
</body></html>
